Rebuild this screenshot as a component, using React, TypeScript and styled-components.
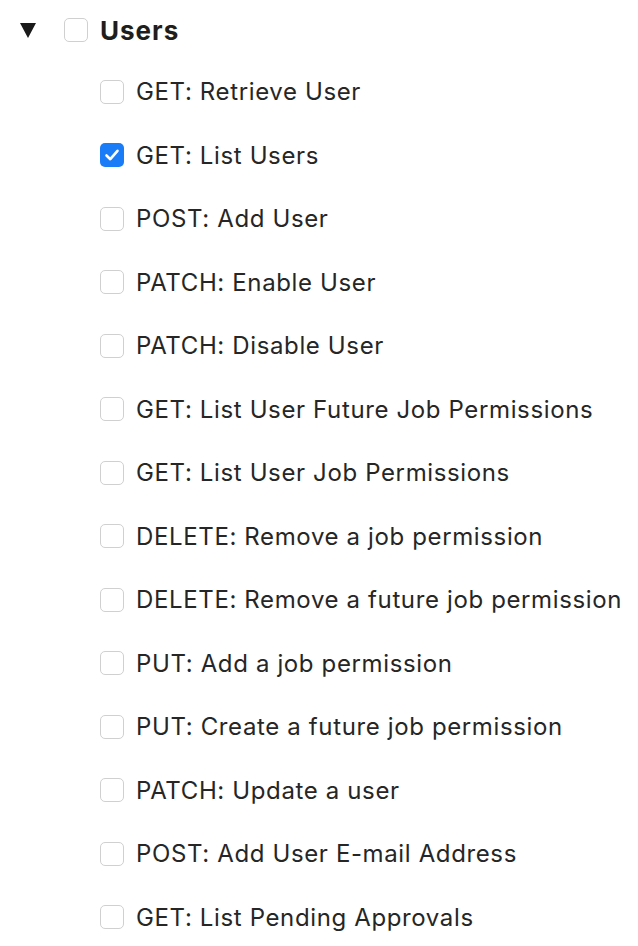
import React from "react";
import styled, { createGlobalStyle } from "styled-components";

const Global = createGlobalStyle`
  html, body { margin: 0; padding: 0; background: #fff; }
  body { font-family: Inter, "Open Sans", sans-serif; color: #222; }
`;

const Tree = styled.div`
  display: flex;
  flex-direction: column;
  width: 638px;
`;

const HeaderRow = styled.div`
  display: flex;
  align-items: center;
  height: 60px;
  padding-left: 20px;
`;

const Caret = styled.span`
  width: 0;
  height: 0;
  border-left: 8.5px solid transparent;
  border-right: 8.5px solid transparent;
  border-top: 15px solid #1a1a1a;
  margin-right: 27px;
`;

const Box = styled.span<{ $checked?: boolean }>`
  box-sizing: border-box;
  width: 24px;
  height: 24px;
  flex: none;
  border-radius: 5px;
  border: ${(p) => (p.$checked ? "none" : "1px solid #d0d0d0")};
  background: ${(p) => (p.$checked ? "#1a7cf7" : "#fff")};
  display: flex;
  align-items: center;
  justify-content: center;
  margin-right: 12px;
`;

const GroupBox = styled(Box)`
  margin-left: 1px;
`;

const GroupLabel = styled.span`
  font-size: 26px;
  font-weight: 700;
  letter-spacing: 1px;
  color: #1e1e1e;
`;

const List = styled.div`
  display: flex;
  flex-direction: column;
  padding-left: 100px;
`;

const Row = styled.div`
  display: flex;
  align-items: center;
  height: 63.5px;
`;

const Label = styled.span`
  font-size: 24px;
  font-weight: 400;
  letter-spacing: 0.63px;
  color: #262626;
  white-space: nowrap;
`;

const items: { label: string; checked?: boolean }[] = [
  { label: "GET: Retrieve User" },
  { label: "GET: List Users", checked: true },
  { label: "POST: Add User" },
  { label: "PATCH: Enable User" },
  { label: "PATCH: Disable User" },
  { label: "GET: List User Future Job Permissions" },
  { label: "GET: List User Job Permissions" },
  { label: "DELETE: Remove a job permission" },
  { label: "DELETE: Remove a future job permission" },
  { label: "PUT: Add a job permission" },
  { label: "PUT: Create a future job permission" },
  { label: "PATCH: Update a user" },
  { label: "POST: Add User E-mail Address" },
  { label: "GET: List Pending Approvals" },
];

const Check = () => (
  <svg width="16" height="16" viewBox="0 0 16 16">
    <path d="M2.5 8.5 L6.3 12.2 L13.5 3.8" fill="none" stroke="#fff" strokeWidth="2.6" strokeLinecap="round" strokeLinejoin="round" />
  </svg>
);

export default function App() {
  return (
    <>
      <Global />
      <Tree>
        <HeaderRow>
          <Caret />
          <GroupBox />
          <GroupLabel>Users</GroupLabel>
        </HeaderRow>
        <List>
          {items.map((it) => (
            <Row key={it.label}>
              <Box $checked={it.checked}>{it.checked && <Check />}</Box>
              <Label>{it.label}</Label>
            </Row>
          ))}
        </List>
      </Tree>
    </>
  );
}
